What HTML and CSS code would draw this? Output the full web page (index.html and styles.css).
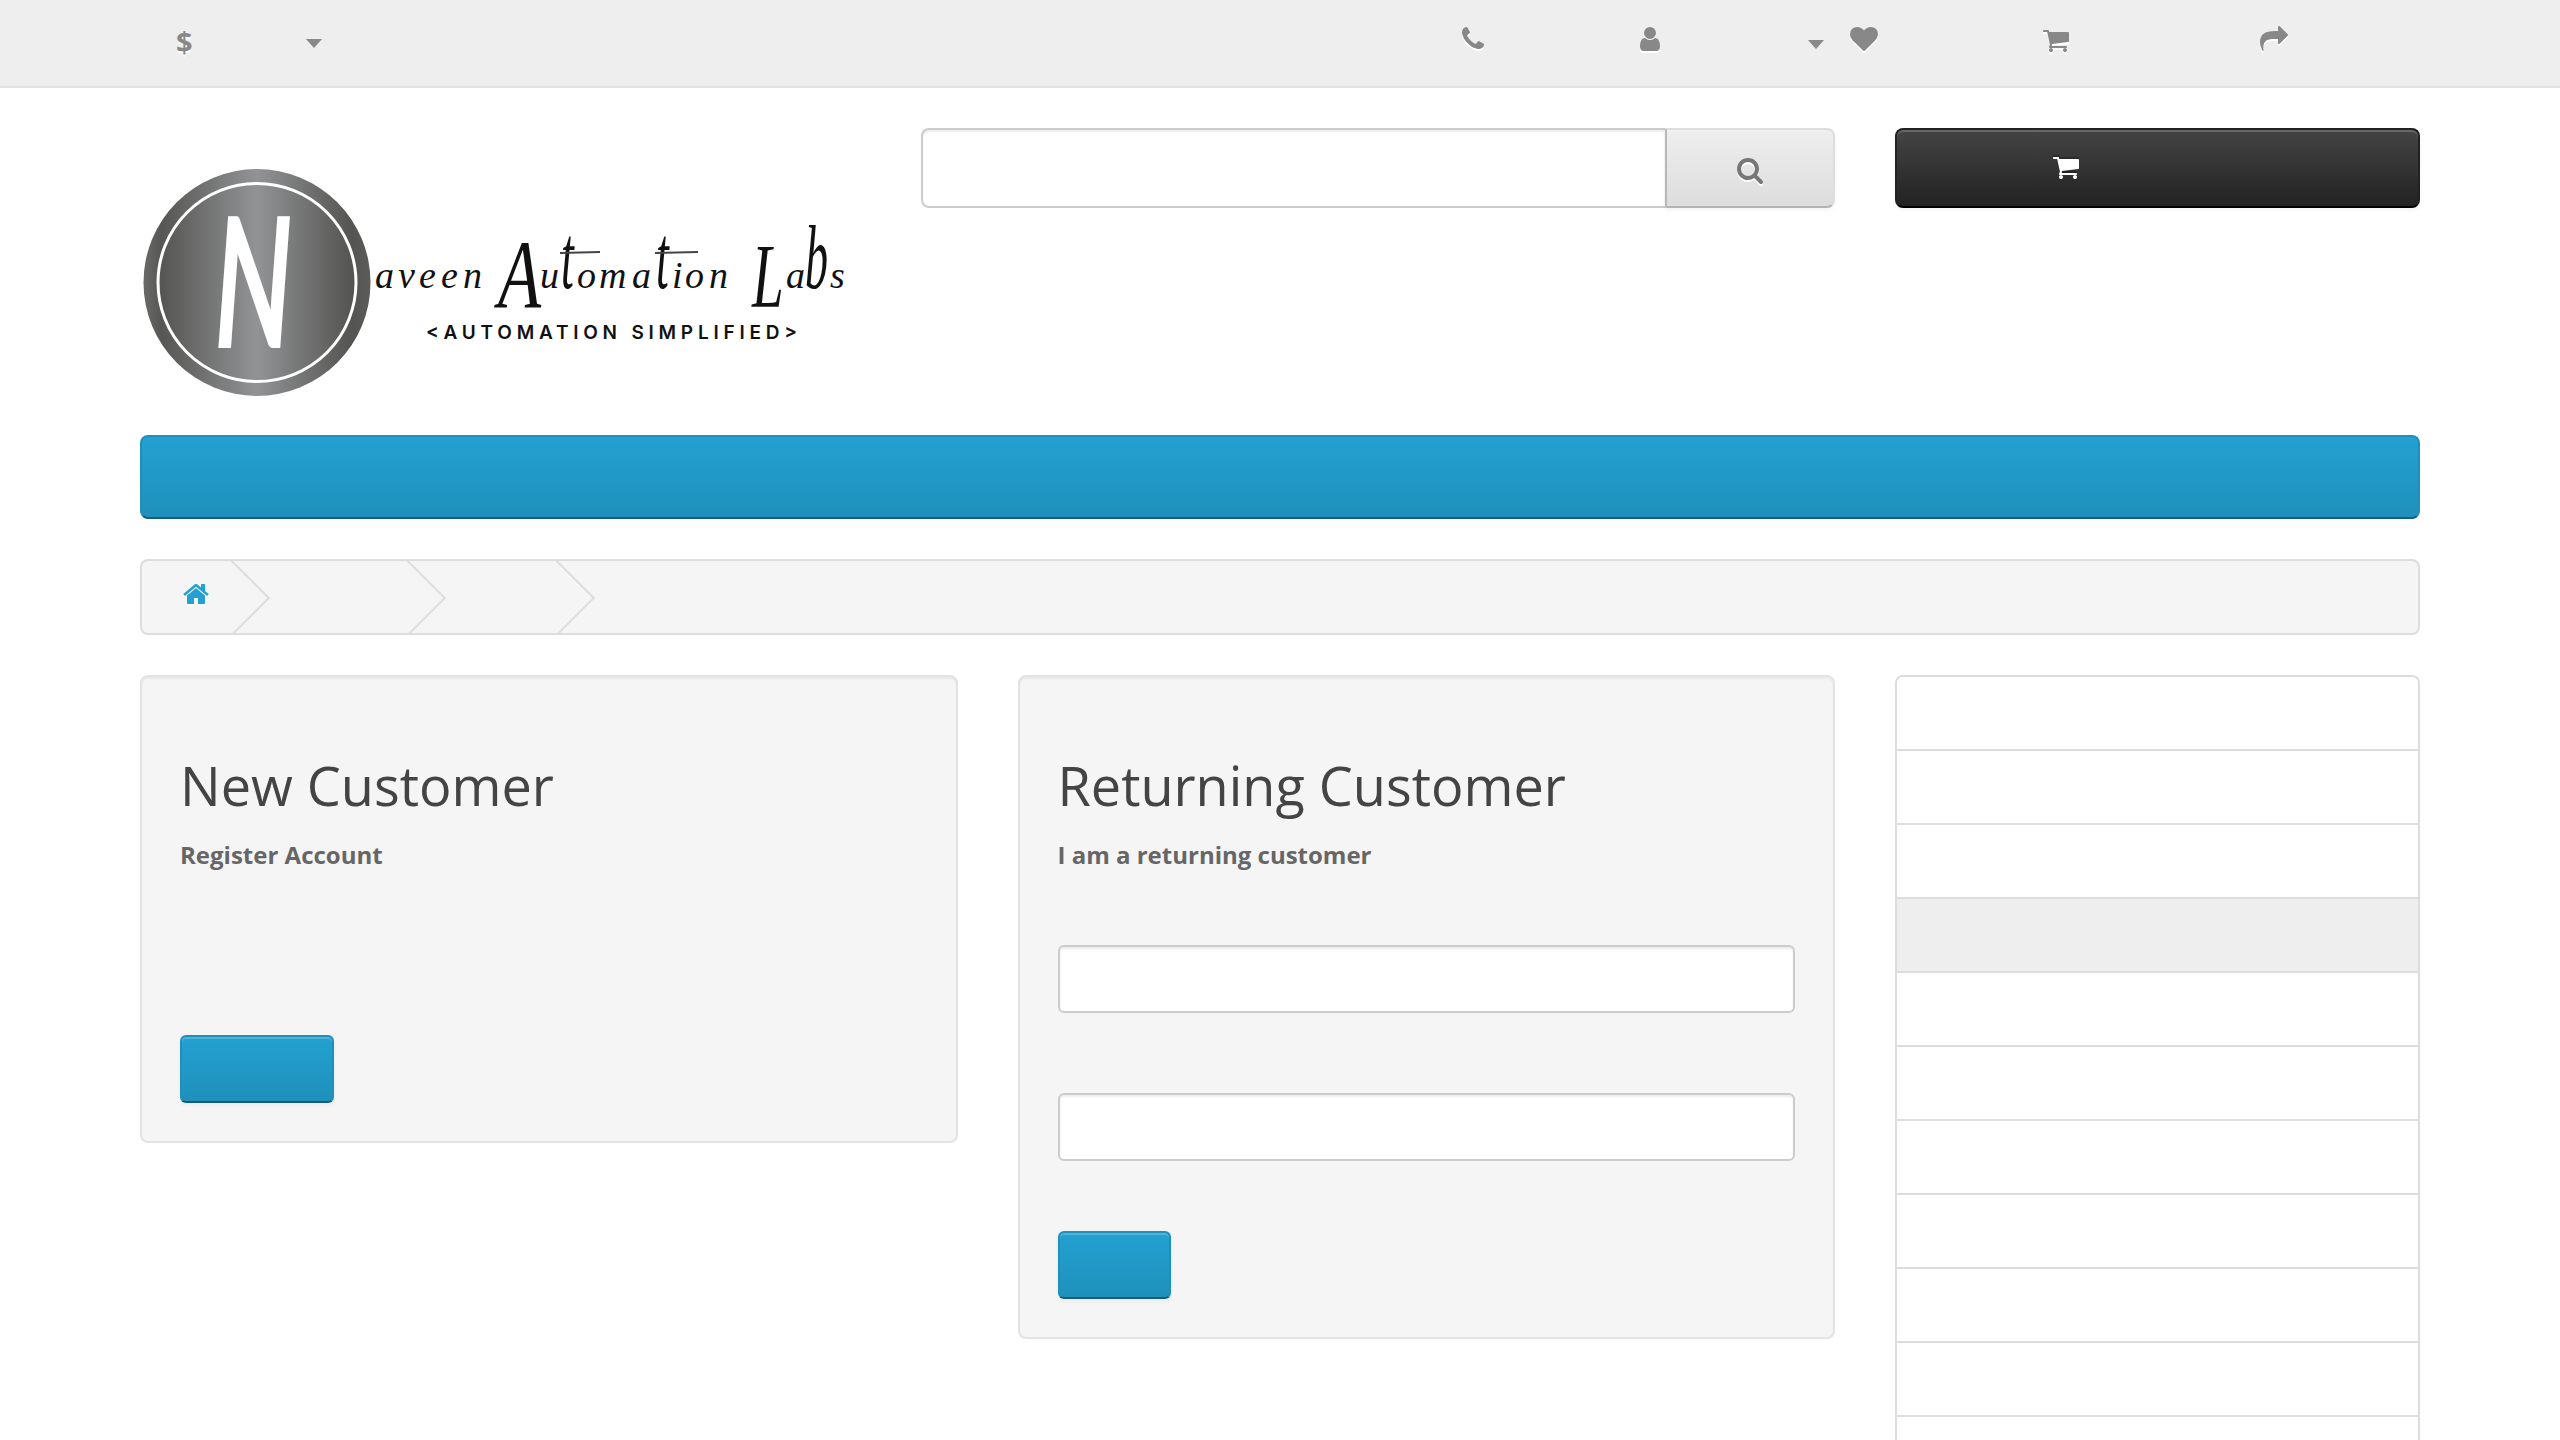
FILE: index.html
```html
<!DOCTYPE html>
<html lang="en">
<head>
<meta charset="utf-8">
<title>Account Login</title>
<link rel="stylesheet" href="styles.css">
</head>
<body>
<svg class="defs" width="0" height="0" aria-hidden="true">
  <symbol id="i-phone" viewBox="0 0 1792 1792"><path d="M1600 1240q0 27-10 70.5t-21 68.5q-21 50-122 106-94 51-186 51-27 0-53-3.5t-57.5-12.5-47-14.5-55.5-20.5-49-18q-98-35-175-83-127-79-264-216t-216-264q-48-77-83-175-3-9-18-49t-20.5-55.5-14.5-47-12.5-57.5-3.5-53q0-92 51-186 56-101 106-122 25-11 68.5-21t70.5-10q14 0 21 3 18 6 53 76 11 19 30 54t35 63.5 31 53.5q3 4 17.5 25t21.5 35.5 7 28.5q0 20-28.5 50t-62 55-62 53-28.5 46q0 9 5 22.5t8.5 20.5 14 24 11.5 19q76 137 174 235t235 174q2 1 19 11.5t24 14 20.5 8.5 22.5 5q18 0 46-28.5t53-62 55-62 50-28.5q14 0 28.5 7t35.5 21.5 25 17.5q25 15 53.5 31t63.5 35 54 30q70 35 76 53 3 7 3 21z"/></symbol>
  <symbol id="i-user" viewBox="0 0 1792 1792"><path d="M1536 1399q0 109-62.5 187t-150.5 78h-854q-88 0-150.5-78t-62.5-187q0-85 8.5-160.5t31.5-152 58.5-131 94-89 134.5-34.5q131 128 313 128t313-128q76 0 134.5 34.5t94 89 58.5 131 31.5 152 8.5 160.5zm-256-887q0 159-112.5 271.5t-271.5 112.5-271.5-112.5-112.5-271.5 112.5-271.5 271.5-112.5 271.5 112.5 112.5 271.5z"/></symbol>
  <symbol id="i-heart" viewBox="0 0 1792 1792"><path d="M896 1664q-26 0-44-18l-624-602q-10-8-27.5-26t-55.5-65.5-68-97.5-53.5-121-23.5-138q0-220 127-344t351-124q62 0 126.5 21.5t120 58 95.5 68.5 76 68q36-36 76-68t95.5-68.5 120-58 126.5-21.5q224 0 351 124t127 344q0 221-229 450l-623 600q-18 18-44 18z"/></symbol>
  <symbol id="i-cart" viewBox="0 0 1792 1792"><path d="M704 1536q0 52-38 90t-90 38-90-38-38-90 38-90 90-38 90 38 38 90zm896 0q0 52-38 90t-90 38-90-38-38-90 38-90 90-38 90 38 38 90zm128-1088v512q0 24-16.5 42.5t-40.5 21.5l-1044 122q13 60 13 70 0 16-24 64h920q26 0 45 19t19 45-19 45-45 19h-1024q-26 0-45-19t-19-45q0-11 8-31.5t16-36 21.5-40 15.5-29.5l-177-823h-204q-26 0-45-19t-19-45 19-45 45-19h256q16 0 28.5 6.5t19.5 15.5 13 24.5 8 26 5.5 29.5 4.5 26h1201q26 0 45 19t19 45z"/></symbol>
  <symbol id="i-share" viewBox="0 0 1792 1792"><path d="M1792 640q0 26-19 45l-512 512q-19 19-45 19t-45-19-19-45v-256h-224q-98 0-175.5 6t-154 21.5-133 42.5-105.5 69.5-80 101-48.5 138.5-17.5 181q0 55 5 123 0 6 2.5 23.5t2.5 26.5q0 15-8.5 25t-23.5 10q-16 0-28-17-7-9-13-22t-13.5-30-10.5-24q-127-285-127-451 0-199 53-333 162-403 875-403h224v-256q0-26 19-45t45-19 45 19l512 512q19 19 19 45z"/></symbol>
  <symbol id="i-search" viewBox="0 0 1792 1792"><path d="M1216 832q0-185-131.5-316.5t-316.5-131.5-316.5 131.5-131.5 316.5 131.5 316.5 316.5 131.5 316.5-131.5 131.5-316.5zm512 832q0 52-38 90t-90 38q-54 0-90-38l-343-342q-179 124-399 124-143 0-273.5-55.5t-225-150-150-225-55.5-273.5 55.5-273.5 150-225 225-150 273.5-55.5 273.5 55.5 225 150 150 225 55.5 273.5q0 220-124 399l343 343q37 37 37 90z"/></symbol>
  <symbol id="i-home" viewBox="0 0 1792 1792"><path d="M1472 992v480q0 26-19 45t-45 19h-384v-384h-256v384h-384q-26 0-45-19t-19-45v-480q0-1 .5-3t.5-3l575-474 575 474q1 2 1 6zm223-69l-62 74q-8 9-21 11h-3q-13 0-21-7l-692-577-692 577q-12 8-24 7-13-2-21-11l-62-74q-8-10-7-23.5t11-21.5l719-599q32-26 76-26t76 26l244 204v-195q0-14 9-23t23-9h192q14 0 23 9t9 23v408l219 182q10 8 11 21.5t-7 23.5z"/></symbol>
</svg>

<nav class="topbar">
  <div class="topbar-inner">
    <span class="currency">$</span>
    <span class="caret caret-currency"></span>
    <svg class="icon top-phone"><use href="#i-phone"/></svg>
    <svg class="icon top-user"><use href="#i-user"/></svg>
    <span class="caret caret-account"></span>
    <svg class="icon top-heart"><use href="#i-heart"/></svg>
    <svg class="icon top-cart"><use href="#i-cart"/></svg>
    <svg class="icon top-share"><use href="#i-share"/></svg>
  </div>
</nav>

<div class="container">
  <header class="header">
    <svg class="logo" viewBox="0 0 720 240" width="720" height="240" role="img" aria-label="Naveen Automation Labs">
      <defs>
        <linearGradient id="metal" x1="0" y1="0" x2="1" y2="0">
          <stop offset="0" stop-color="#6a6a6a"/>
          <stop offset="0.08" stop-color="#565654"/>
          <stop offset="0.5" stop-color="#929395"/>
          <stop offset="0.92" stop-color="#545452"/>
          <stop offset="1" stop-color="#5c5c5a"/>
        </linearGradient>
      </defs>
      <circle cx="117" cy="122.5" r="113.5" fill="url(#metal)"/>
      <circle cx="117" cy="122.5" r="99" fill="none" stroke="#fff" stroke-width="3"/>
      <text class="logo-n" transform="translate(113.5 188) scale(0.6 1)" text-anchor="middle">N</text>

      <text class="logo-script" x="235 258 279 301 323" y="128">aveen</text>

      <text class="logo-cap" transform="translate(358 147) scale(.72 1)">A</text>
      <text class="logo-script" x="400" y="128">u</text>
      <text class="logo-tall" transform="translate(421 128) scale(.5 1)">t</text>
      <text class="logo-script" x="437 459 492" y="128">oma</text>
      <text class="logo-tall" transform="translate(516 128) scale(.5 1)">t</text>
      <text class="logo-script" x="532 545 569" y="128">ion</text>
      <line class="logo-bar" x1="420" y1="93" x2="460" y2="92"/>
      <line class="logo-bar" x1="515" y1="93" x2="558" y2="92"/>

      <text class="logo-cap logo-cap-l" transform="translate(612 147) scale(.62 1)">L</text>
      <text class="logo-script" x="646" y="128">a</text>
      <text class="logo-tall" transform="translate(665 128) scale(.5 1)">b</text>
      <text class="logo-script" x="690" y="128">s</text>

      <text class="logo-tag" x="286" y="179" textLength="371" lengthAdjust="spacing">&lt;AUTOMATION SIMPLIFIED&gt;</text>
    </svg>
    <div class="search">
      <input class="search-input" type="text" aria-label="Search">
      <button class="search-btn" type="button" aria-label="Search"><svg class="icon icon-search"><use href="#i-search"/></svg></button>
    </div>
    <button class="cart-btn" type="button" aria-label="Cart"><svg class="icon icon-cart-white"><use href="#i-cart"/></svg></button>
  </header>

  <div class="menu"></div>

  <ul class="breadcrumb">
    <li class="crumb crumb-home"><svg class="icon icon-home"><use href="#i-home"/></svg></li>
    <li class="crumb crumb-account"></li>
    <li class="crumb crumb-login"></li>
  </ul>

  <main class="content">
    <div class="columns">
      <section class="well well-new">
        <h2 class="well-title">New Customer</h2>
        <p class="well-sub">Register Account</p>
        <a class="btn btn-continue" href="#" aria-label="Continue"></a>
      </section>
      <section class="well">
        <h2 class="well-title">Returning Customer</h2>
        <p class="well-sub">I am a returning customer</p>
        <input class="field field-email" type="text" aria-label="E-Mail Address">
        <input class="field field-password" type="password" aria-label="Password">
        <a class="btn btn-login" href="#" aria-label="Login"></a>
      </section>
    </div>
    <aside class="list-group">
      <a class="list-item" href="#"></a>
      <a class="list-item" href="#"></a>
      <a class="list-item" href="#"></a>
      <a class="list-item list-item-active" href="#"></a>
      <a class="list-item" href="#"></a>
      <a class="list-item" href="#"></a>
      <a class="list-item" href="#"></a>
      <a class="list-item" href="#"></a>
      <a class="list-item" href="#"></a>
      <a class="list-item" href="#"></a>
      <a class="list-item" href="#"></a>
      <a class="list-item" href="#"></a>
      <a class="list-item" href="#"></a>
    </aside>
  </main>
</div>
</body>
</html>
```

FILE: styles.css
```css
* { box-sizing: border-box; }
html, body { margin: 0; height: 100%; overflow: hidden; }
body {
  background: #fff;
  color: #666;
  font-family: "Open Sans", sans-serif;
  font-size: 24px;
  line-height: 40px;
}
.defs { position: absolute; }

.icon { display: block; width: 28px; height: 28px; fill: currentColor; flex: none; }

/* top bar */
.topbar {
  height: 88px;
  background: #eee;
  border-bottom: 2px solid #e2e2e2;
  color: #888;
}
.topbar-inner {
  width: 2280px;
  height: 86px;
  margin: 0 auto;
  display: flex;
  align-items: center;
}
.topbar-inner .icon { filter: drop-shadow(0 2px 0 #fff); }
.currency {
  margin-left: 36px;
  margin-top: -3px;
  font-weight: 700;
  font-size: 29px;
  line-height: 40px;
  text-shadow: 0 2px 0 #fff;
}
.caret {
  width: 0;
  height: 0;
  flex: none;
  border-left: 8px solid transparent;
  border-right: 8px solid transparent;
  border-top: 9px solid #888;
}
.caret-currency { margin-left: 113px; margin-top: 0; }
.top-phone { margin-left: 1137px; margin-top: -8px; }
.top-user { margin-left: 149px; margin-top: -8px; }
.caret-account { margin-left: 144px; margin-top: 2px; }
.top-heart { margin-left: 26px; margin-top: -8px; }
.top-cart { margin-left: 164px; margin-top: -6px; }
.top-share { margin-left: 190px; margin-top: -8px; }

/* page */
.container { width: 2280px; margin: 0 auto; }

/* header */
.header {
  display: grid;
  grid-template-columns: 721px 914px 525px;
  column-gap: 60px;
  align-items: start;
  padding-top: 40px;
  height: 347px;
}
.logo { display: block; margin-top: 32px; }
.logo-n { font-family: "Lato", sans-serif; font-style: italic; font-weight: 700; font-size: 182px; fill: #fff; }
.logo-script { font-family: "Liberation Serif", serif; font-style: italic; font-size: 38px; fill: #111; }
.logo-cap { font-family: "Liberation Serif", serif; font-style: italic; font-size: 98px; fill: #111; }
.logo-cap-l { font-size: 92px; }
.logo-tall { font-family: "Liberation Serif", serif; font-style: italic; font-size: 92px; fill: #111; }
.logo-bar { stroke: #444; stroke-width: 2; }
.logo-tag { font-family: "Inter", sans-serif; font-weight: 600; font-size: 19px; fill: #111; }

.search { display: flex; height: 80px; }
.search-input {
  flex: 1;
  min-width: 0;
  height: 80px;
  border: 2px solid #ccc;
  border-right: 0;
  border-radius: 8px 0 0 8px;
  background: #fff;
  box-shadow: inset 0 2px 2px rgba(0, 0, 0, .075);
  outline: 0;
}
.search-btn {
  width: 170px;
  height: 80px;
  padding: 4px 0 0 0;
  display: flex;
  align-items: center;
  justify-content: center;
  color: #777;
  background: linear-gradient(#eee, #ddd);
  border: 2px solid #ddd;
  border-color: #ddd #ddd #b3b3b3 #b7b7b7;
  border-radius: 0 8px 8px 0;
  box-shadow: inset 0 2px 0 rgba(255, 255, 255, .2), 0 2px 4px rgba(0, 0, 0, .05);
}
.icon-search { filter: drop-shadow(0 2px 0 #fff); }
.cart-btn {
  height: 80px;
  padding: 0 0 2px 155px;
  display: flex;
  align-items: center;
  color: #fff;
  background: linear-gradient(#444, #222);
  border: 2px solid #222;
  border-bottom-color: #000;
  border-radius: 8px;
  box-shadow: inset 0 2px 0 rgba(255, 255, 255, .2), 0 2px 4px rgba(0, 0, 0, .05);
}
.icon-cart-white { filter: drop-shadow(0 -2px 0 rgba(0, 0, 0, .25)); }

/* menu */
.menu {
  height: 84px;
  background: linear-gradient(#23a1d1, #1f90bb);
  border: 2px solid #1f90bb;
  border-bottom-color: #145e7a;
  border-radius: 8px;
}

/* breadcrumb */
.breadcrumb {
  list-style: none;
  display: flex;
  height: 76px;
  margin: 40px 0 40px;
  padding: 0;
  background: #f5f5f5;
  border: 2px solid #ddd;
  border-radius: 8px;
  overflow: hidden;
}
.crumb { position: relative; height: 72px; flex: none; }
.crumb::after {
  content: "";
  position: absolute;
  top: 10px;
  right: 11px;
  width: 52px;
  height: 52px;
  border-right: 2px solid #ddd;
  border-bottom: 2px solid #ddd;
  transform: rotate(-45deg);
}
.crumb-home { width: 128px; padding: 19px 0 0 40px; color: #23a1d1; }
.crumb-account { width: 176px; }
.crumb-login { width: 149px; }
.icon-home { filter: drop-shadow(0 2px 0 #fff); }

/* content */
.content {
  display: grid;
  grid-template-columns: 1695px 525px;
  column-gap: 60px;
  align-items: start;
}
.columns {
  display: grid;
  grid-template-columns: 817.5px 817.5px;
  column-gap: 60px;
  align-items: start;
}
.well {
  display: flex;
  flex-direction: column;
  align-items: flex-start;
  padding: 38px;
  background: #f5f5f5;
  border: 2px solid #e3e3e3;
  border-radius: 8px;
  box-shadow: inset 0 2px 2px rgba(0, 0, 0, .05);
}
.well-title {
  margin: 40px 0 20px;
  font-size: 54px;
  font-weight: 400;
  line-height: 60px;
  color: #444;
}
.well-sub {
  margin: 0;
  font-weight: 700;
  font-size: 24px;
  line-height: 40px;
  color: #666;
}
.btn {
  display: block;
  height: 68px;
  background: linear-gradient(#23a1d1, #1f90bb);
  border: 2px solid #1f90bb;
  border-bottom-color: #145e7a;
  border-radius: 6px;
  box-shadow: inset 0 2px 0 rgba(255, 255, 255, .2), 0 2px 4px rgba(0, 0, 0, .05);
}
.btn-continue { width: 154px; margin-top: 160px; }
.btn-login { width: 113px; margin-top: 70px; }
.field {
  width: 100%;
  height: 68px;
  background: #fff;
  border: 2px solid #ccc;
  border-radius: 6px;
  box-shadow: inset 0 2px 2px rgba(0, 0, 0, .075);
  outline: 0;
}
.field-email { margin-top: 70px; }
.field-password { margin-top: 80px; }

/* sidebar list */
.list-group {
  display: flex;
  flex-direction: column;
  border: 2px solid #ddd;
  border-bottom: 0;
  border-radius: 8px 8px 0 0;
  overflow: hidden;
  background: #fff;
}
.list-item {
  display: block;
  height: 74px;
  border-bottom: 2px solid #ddd;
  background: #fff;
}
.list-item-active { background: #eee; }
```
